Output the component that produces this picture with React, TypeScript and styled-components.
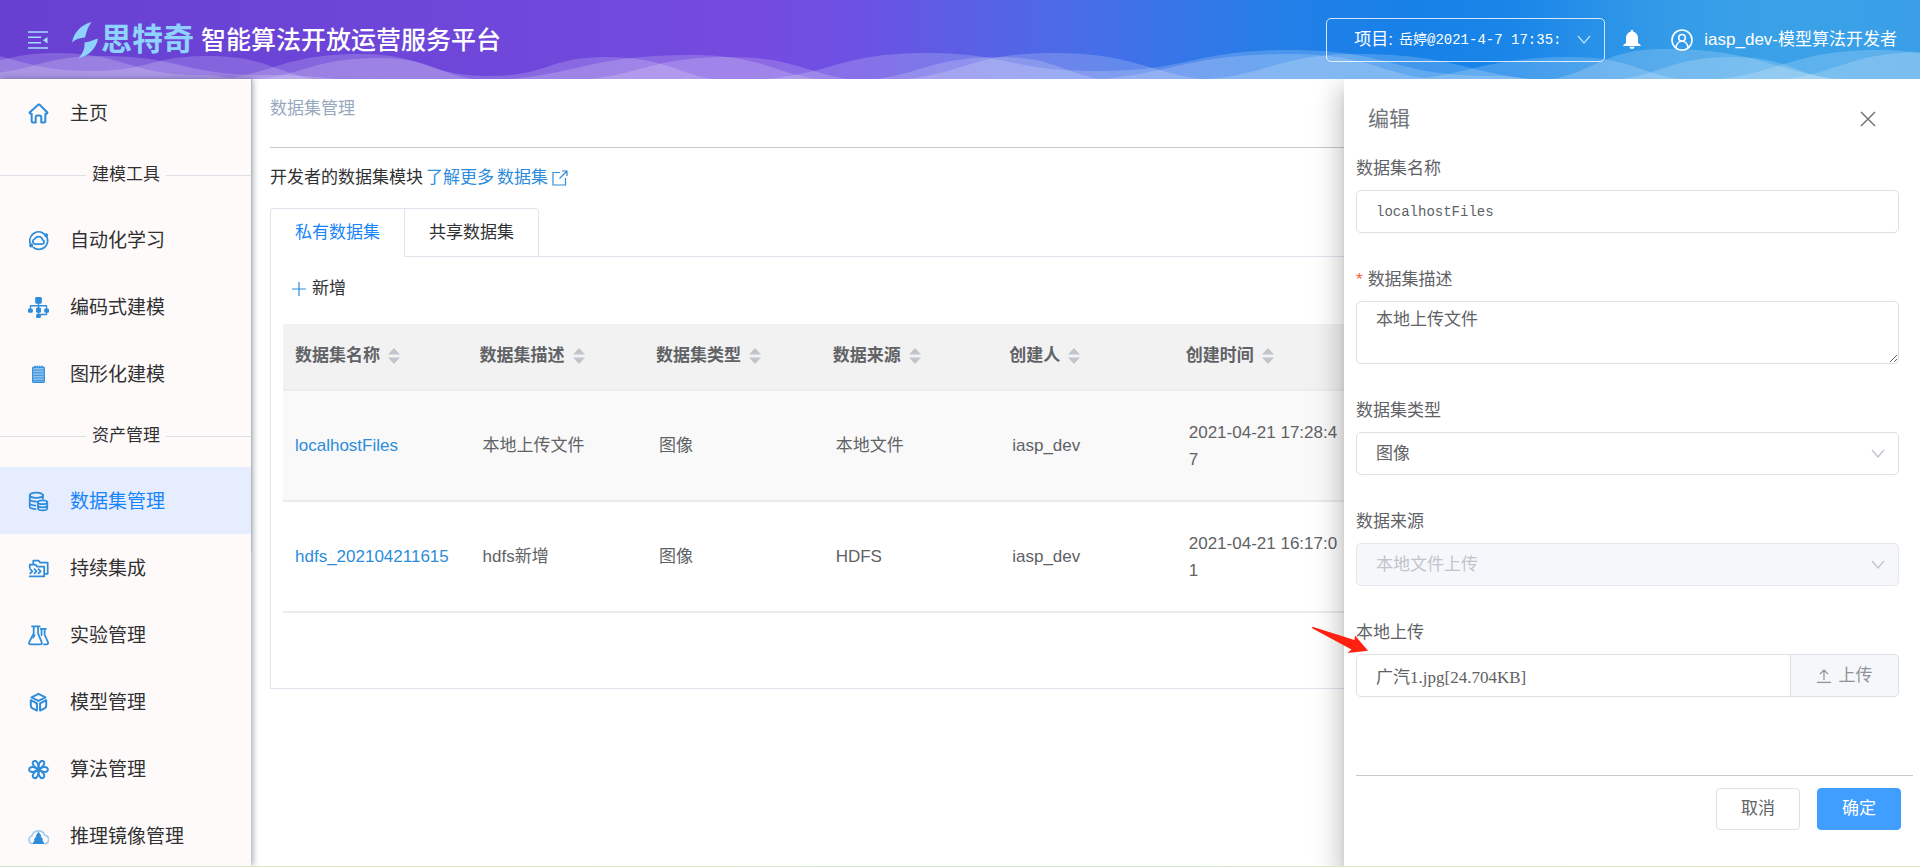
import React, { useState } from "react";
import styled, { createGlobalStyle, css } from "styled-components";

const sans = `"Liberation Sans", "Noto Sans CJK SC", sans-serif`;
const serif = `"Liberation Serif", "Noto Sans CJK SC", serif`;
const mono = `"Liberation Mono", "Noto Sans CJK SC", monospace`;

const color = {
  text: "#303133",
  regular: "#606266",
  muted: "#909399",
  placeholder: "#c0c4cc",
  border: "#dcdfe6",
  line: "#dfe4ed",
  link: "#2d8cdb",
  primary: "#409eff",
  active: "#1684fc",
};

const GlobalStyle = createGlobalStyle`
  *, *::before, *::after { box-sizing: border-box; }
  body {
    margin: 0;
    background: #fff;
    color: ${color.text};
    font-family: ${sans};
    font-size: 17px;
    line-height: 24px;
  }
  button, input, select, textarea { font: inherit; color: inherit; }
  a { color: ${color.link}; text-decoration: none; }
`;

/* ---------- shell ---------- */

const Shell = styled.div`
  position: relative;
  display: grid;
  grid-template-rows: 79px minmax(0, 1fr) 1px;
  height: 100vh;
  overflow: hidden;
`;

const Body = styled.div`
  display: flex;
  min-height: 0;
`;

const BottomStrip = styled.div`
  position: relative;
  z-index: 5;
  background: linear-gradient(90deg, #cfe8d4, #dcebc4 20%, #cfe8cc 50%, #dcebc4);
`;

/* ---------- header ---------- */

const Header = styled.header`
  position: relative;
  display: flex;
  align-items: center;
  justify-content: space-between;
  padding: 0 23px 0 28px;
  color: #fff;
  background: linear-gradient(
    90deg,
    #6740d2 0%,
    #7049dc 30%,
    #754adf 39%,
    #6b52e4 45%,
    #5861e6 51%,
    #4a6ce8 56%,
    #227fe8 67%,
    #1681e8 74%,
    #1a86e8 79%,
    #3299e8 86%,
    #3aa1e8 92%,
    #3a9fe8 100%
  );
`;

const Waves = styled.svg`
  position: absolute;
  left: 0;
  bottom: 0;
  width: 100%;
  height: 100%;
`;

const HeaderGroup = styled.div`
  position: relative;
  display: flex;
  align-items: center;
`;

const IconButton = styled.button`
  display: flex;
  padding: 0;
  border: 0;
  background: none;
  cursor: pointer;
`;

const Brand = styled.div`
  display: flex;
  align-items: center;
  gap: 3px;
  margin: 0 7px 0 24px;
  color: #8fd2ff;
  font-size: 31px;
  font-weight: 700;
  line-height: 36px;
`;

const SiteTitle = styled.h1`
  margin: 0;
  font-size: 25px;
  font-weight: 500;
  line-height: 36px;
`;

const ProjectPicker = styled.div`
  display: flex;
  align-items: center;
  gap: 6px;
  width: 279px;
  height: 44px;
  margin-right: 18px;
  padding: 0 13px 0 27px;
  border: 1px solid rgba(255, 255, 255, 0.8);
  border-radius: 5px;
`;

const ProjectSelect = styled.select`
  appearance: none;
  flex: 1;
  min-width: 0;
  margin-right: 6px;
  padding: 0;
  border: 0;
  outline: 0;
  background: none;
  font-family: ${mono};
  font-size: 14px;
  text-overflow: clip;
`;

const UserLink = styled.a`
  display: flex;
  align-items: center;
  gap: 11px;
  margin-left: 30px;
  color: #fff;
`;

/* ---------- sidebar ---------- */

const Sidebar = styled.nav`
  position: relative;
  z-index: 1;
  flex: none;
  width: 251px;
  background: #fffafa;
  box-shadow: 2px 0 6px rgba(0, 21, 41, 0.35);
`;

const ScrollThumb = styled.span`
  position: absolute;
  top: 0;
  right: -1px;
  width: 1px;
  height: 60%;
  background: #b4b6ba;
`;

const NavItem = styled.a<{ $active?: boolean }>`
  display: flex;
  align-items: center;
  gap: 21px;
  height: 67px;
  padding: 2px 0 0 28px;
  font-size: 19px;
  color: ${(p) => (p.$active ? color.active : color.text)};
  background: ${(p) => (p.$active ? "#e6edff" : "transparent")};
`;

const NavDivider = styled.div`
  display: flex;
  align-items: center;
  gap: 6px;
  height: 60px;
  padding-bottom: 2px;
  &::before,
  &::after {
    content: "";
    height: 1px;
    background: ${color.border};
  }
  &::before {
    width: 86px;
  }
  &::after {
    flex: 1;
  }
`;

/* ---------- main ---------- */

const Main = styled.main`
  flex: 1;
  min-width: 0;
  padding: 0 19px;
`;

const PageHeading = styled.h2`
  margin: 0;
  padding: 18px 0 26px;
  border-bottom: 1px solid #c8c8cc;
  color: #97a8be;
  font-size: 17px;
  font-weight: 400;
`;

const Intro = styled.p`
  display: flex;
  align-items: center;
  gap: 3px;
  margin: 18px 0;
`;

const IntroLink = styled.a`
  display: inline-flex;
  align-items: center;
  gap: 4px;
`;

const TabBar = styled.div`
  display: flex;
  &::after {
    content: "";
    flex: 1;
    border-bottom: 1px solid ${color.line};
  }
`;

const Tab = styled.button<{ $active?: boolean }>`
  height: 49px;
  padding: 0 24px;
  border: 1px solid ${color.line};
  border-left-width: 0;
  background: #fff;
  cursor: pointer;
  color: ${(p) => (p.$active ? color.active : color.text)};
  ${(p) => p.$active && css`border-bottom-color: #fff;`}
  &:first-child {
    border-left-width: 1px;
    border-top-left-radius: 4px;
  }
  &:last-child {
    border-top-right-radius: 4px;
  }
`;

const Panel = styled.section`
  padding: 20px 12px 75px;
  border: 1px solid ${color.line};
  border-top: 0;
`;

const AddButton = styled.button`
  display: flex;
  align-items: center;
  gap: 6px;
  margin: 0 0 23px 9px;
  padding: 0;
  border: 0;
  background: none;
  cursor: pointer;
`;

const Table = styled.table`
  width: 100%;
  table-layout: fixed;
  border-collapse: separate;
  border-spacing: 0;
  color: ${color.regular};
`;

const HeadCell = styled.th`
  height: 67px;
  padding: 0 12px 2px;
  border-bottom: 2px solid #ececec;
  background: #f2f2f2;
  text-align: left;
  font-weight: 700;
  white-space: nowrap;
`;

const HeadLabel = styled.span`
  display: inline-flex;
  align-items: center;
  gap: 8px;
`;

const Row = styled.tr<{ $striped?: boolean }>`
  background: ${(p) => (p.$striped ? "#f9f9f9" : "#fff")};
`;

const Cell = styled.td`
  height: 111px;
  padding: 0 8px 0 15px;
  border-bottom: 2px solid #ebebef;
  line-height: 27px;
  word-break: break-all;
  &:first-child {
    padding-left: 12px;
  }
`;

/* ---------- drawer ---------- */

const Drawer = styled.aside`
  position: absolute;
  z-index: 3;
  top: 79px;
  right: 0;
  bottom: 0;
  width: 30%;
  background: #fff;
  color: ${color.regular};
  clip-path: inset(0 0 0 -60px);
  box-shadow: 0 8px 10px -5px rgba(0, 0, 0, 0.2),
    0 16px 24px 2px rgba(0, 0, 0, 0.14), 0 6px 30px 5px rgba(0, 0, 0, 0.12);
`;

const DrawerHead = styled.div`
  display: flex;
  align-items: center;
  justify-content: space-between;
  padding: 23px 44px 21px 24px;
  color: #72767b;
`;

const DrawerTitle = styled.h2`
  margin: 0;
  font-size: 21px;
  font-weight: 400;
  line-height: 33px;
`;

const Form = styled.form`
  padding-left: 12px;
`;

const Field = styled.div`
  margin: 0 21px 34px 0;
`;

const Label = styled.label<{ $required?: boolean }>`
  display: block;
  padding: 1px 0 9px;
  ${(p) =>
    p.$required &&
    css`
      &::before {
        content: "*";
        margin-right: 5px;
        color: #ff5b45;
      }
    `}
`;

const control = css`
  display: block;
  width: 100%;
  border: 1px solid ${color.border};
  border-radius: 5px;
  outline: 0;
  background: #fff;
  color: ${color.regular};
  font-family: ${serif};
  &:disabled {
    background: #f5f7fa;
    border-color: #e4e7ed;
    color: ${color.placeholder};
    opacity: 1;
  }
`;

const TextInput = styled.input<{ $code?: boolean }>`
  ${control}
  height: 43px;
  padding: 0 19px;
  ${(p) =>
    p.$code &&
    css`
      font-family: ${mono};
      font-size: 14px;
    `}
`;

const TextArea = styled.textarea`
  ${control}
  height: 63px;
  padding: 5px 19px;
  line-height: 26px;
  resize: vertical;
`;

const SelectBox = styled.div`
  display: grid;
  align-items: center;
  & > * {
    grid-area: 1 / 1;
  }
  & > svg {
    justify-self: end;
    margin-right: 14px;
    pointer-events: none;
  }
`;

const Select = styled.select`
  ${control}
  appearance: none;
  height: 43px;
  padding: 0 40px 0 19px;
`;

const UploadRow = styled.div`
  position: relative;
  display: flex;
  & > input {
    flex: 1;
    min-width: 0;
    border-radius: 5px 0 0 5px;
  }
`;

const UploadButton = styled.button`
  display: flex;
  align-items: center;
  justify-content: center;
  gap: 8px;
  width: 108px;
  border: 1px solid ${color.border};
  border-left: 0;
  border-radius: 0 5px 5px 0;
  background: #f5f7fa;
  color: ${color.muted};
  cursor: pointer;
`;

const Pointer = styled.svg`
  position: absolute;
  left: -44px;
  top: -27px;
`;

const Actions = styled.div`
  display: flex;
  justify-content: flex-end;
  gap: 17px;
  margin: 78px 7px 0 0;
  padding: 12px 12px 0 0;
  border-top: 1px solid #c8c8cc;
`;

const ActionButton = styled.button<{ $primary?: boolean }>`
  width: 84px;
  height: 42px;
  padding: 0;
  border: 1px solid ${(p) => (p.$primary ? color.primary : color.border)};
  border-radius: 4px;
  background: ${(p) => (p.$primary ? color.primary : "#fff")};
  color: ${(p) => (p.$primary ? "#fff" : color.regular)};
  cursor: pointer;
`;

/* ---------- icons ---------- */

type IconProps = { size?: number; children: React.ReactNode };

const Icon = ({ size = 21, children }: IconProps) => (
  <svg
    width={size}
    height={size}
    viewBox="0 0 24 24"
    fill="none"
    stroke={color.link}
    strokeWidth="2"
    strokeLinecap="round"
    strokeLinejoin="round"
    aria-hidden="true"
  >
    {children}
  </svg>
);

const navIcons = {
  home: (
    <Icon>
      <path
        strokeWidth="2.3"
        d="M12 1.8 1.8 10.8c0 1 .6 1.6 1.6 1.6h.8v8.400c0 .9.4 1.400 1.400 1.400h3.200v-5.600c0-1.400.8-2.200 2.200-2.200h2c1.400 0 2.200.8 2.200 2.200v5.600h3.200c1 0 1.400-.5 1.400-1.400v-8.400h.8c1 0 1.600-.6 1.600-1.600L13 1.800z"
      />
    </Icon>
  ),
  auto: (
    <Icon>
      <path d="M3 16.500A10 10 0 0 1 18.500 4.600M21.300 7.500A10 10 0 0 1 6 19.800" />
      <circle cx="20.700" cy="6" r="1.300" fill={color.link} />
      <circle cx="3.600" cy="17.800" r="1.300" fill={color.link} />
      <path d="M8 16h8.300a2.400 2.400 0 0 0 .4-4.700 4.700 4.700 0 0 0-8.900-1A2.900 2.900 0 0 0 8 16z" />
    </Icon>
  ),
  code: (
    <Icon>
      <g fill={color.link} stroke="none">
        <rect x="8.200" y="0" width="7.600" height="7.600" rx="1.500" />
        <rect x="0" y="13" width="5.500" height="5" rx="1.500" />
        <rect x="9.200" y="12" width="5.600" height="6" rx="1.500" />
        <rect x="18.500" y="13" width="5.500" height="5" rx="1.500" />
        <rect x="9.200" y="19.500" width="5.600" height="4.500" rx="1.500" />
      </g>
      <path strokeWidth="1.500" d="M12 7v13M2.800 13.500V10h18.400v3.500M21.200 17.500v2.500H12" />
    </Icon>
  ),
  graph: (
    <Icon>
      <rect x="5.400" y="3.500" width="13.200" height="17.600" rx="1" fill="#8fc1ec" strokeWidth="1.500" />
      <path strokeWidth="1.500" d="M8 2.500v1M10.700 2.500v1M13.400 2.500v1M16 2.500v1" />
      <path strokeWidth="1" d="M7 7h10M7 10h10M7 13h10M7 16h10M7 19h10" />
    </Icon>
  ),
  dataset: (
    <Icon>
      <ellipse cx="9.500" cy="4.800" rx="7.500" ry="3" />
      <path d="M2 4.800v13.200c0 1.400 2.400 2.400 6.500 2.700M2 9.500c0 1.500 3.400 2.600 8 2.600M2 14c0 1.300 2.600 2.300 6.500 2.600M17 4.800v4" />
      <ellipse cx="16.700" cy="12.800" rx="5.300" ry="2.200" />
      <path d="M11.400 12.800v7c0 1.400 2.300 2.400 5.300 2.400s5.300-1 5.300-2.400v-7M11.400 16.300c0 1.300 2.300 2.300 5.300 2.300s5.300-1 5.300-2.300" />
    </Icon>
  ),
  pipeline: (
    <Icon>
      <path d="M6 6V3h6l2 2.300h8.500V18H20" />
      <path d="M2 11V7.500h6.500l2 2.300H18.500V21H2" />
      <path d="M2.500 12.800l2.500 2.400-2.500 2.400M7.300 12.800l2.500 2.400-2.500 2.400M12 12.800l2.500 2.400-2.500 2.400" />
    </Icon>
  ),
  flask: (
    <Icon>
      <path d="M4.500 1.500h9M6.500 2v7.500L1.400 19.500c-.6 1.600.2 2.700 1.600 2.700h11c1.600 0 2.300-1.200 1.600-2.700L11.500 9.500V2" />
      <path d="M14.500 4.500h6M19 5v6l3.800 8.500c.5 1.500-.2 2.700-1.600 2.700h-3M15.500 5v6.500M6 14.500l1.500-3" />
    </Icon>
  ),
  cube: (
    <Icon>
      <path strokeWidth="2.300" d="M12 2.200l8 3.900-8 4.100-8-4.100z" />
      <path strokeWidth="2.300" d="M3.200 9.300l7 3.600v8.300l-5-2.500c-1.300-.7-2-1.600-2-3zM20.800 9.300l-7 3.600v8.300l5-2.500c1.300-.7 2-1.600 2-3z" />
    </Icon>
  ),
  atom: (
    <Icon>
      <g strokeWidth="2.300">
        <path d="M12 12C8 8.500 1.300 8 1.300 12s6.700 3.500 10.700 0c4-3.500 10.700-4 10.700 0s-6.700 3.500-10.700 0z" />
        <path d="M12 12C13 6.800 10 .8 6.700 2.500S7 10 12 12c5 2 8.600 7.800 5.300 9.500S11 17.200 12 12z" />
        <path d="M12 12c5-2 8.600-7.800 5.300-9.500S11 6.800 12 12c1 5.200-2 11.200-5.300 9.500S7 14 12 12z" />
      </g>
    </Icon>
  ),
  cloud: (
    <Icon>
      <path
        stroke="#a5cdf0"
        d="M4.500 20.200A4.600 4.600 0 0 1 4.500 11.300 7.800 7.800 0 0 1 19.300 10.600a4.900 4.900 0 0 1 .7 9.600"
      />
      <path fill={color.link} stroke="none" d="M12 6.500l3.300 4.500-1 .4 3 4-1 .4 2.700 4.900H5l2.700-4.900-1-.4 3-4-1-.4z" />
    </Icon>
  ),
};

const Chevron = ({ stroke = color.placeholder }: { stroke?: string }) => (
  <svg width="14" height="9" viewBox="0 0 14 9" fill="none" stroke={stroke} strokeWidth="1.300" aria-hidden="true">
    <path d="M1 1l6 7 6-7" />
  </svg>
);

const SortIcon = () => (
  <svg width="12" height="16" viewBox="0 0 12 16" fill={color.placeholder} aria-hidden="true">
    <path d="M0 6.500L6 0l6 6.500zM0 9.500h12L6 16z" />
  </svg>
);

/* Each wave is a list of its crests and troughs, joined by smooth curves. */
type Point = [number, number];

const waves: Point[][] = [
  [[-30, 62], [55, 53], [200, 75], [260, 82]],
  [[-60, 50], [92, 71], [208, 56], [350, 82]],
  [[-30, 74], [101, 56], [263, 75], [400, 82]],
  [[225, 81], [380, 58], [500, 81]],
  [[180, 82], [361, 54], [490, 76], [606, 57], [750, 82]],
  [[550, 81], [729, 57], [890, 82]],
  [[460, 81], [692, 55], [860, 82]],
  [[735, 80], [925, 53], [1095, 71], [1290, 50], [1493, 76], [1560, 82]],
  [[870, 81], [1052, 53], [1250, 82]],
  [[840, 81], [1000, 57], [1130, 81]],
  [[1050, 81], [1290, 54], [1475, 82]],
  [[1180, 80], [1358, 54], [1580, 81]],
  [[1370, 81], [1572, 57], [1710, 81]],
  [[1520, 82], [1664, 49], [1890, 82]],
  [[1590, 81], [1732, 57], [1860, 81]],
  [[1750, 81], [1925, 52], [2080, 81]],
  [[1680, 81], [1879, 50], [2040, 81]],
];

const wavePath = ([first, ...rest]: Point[]) => {
  let d = `M${first[0]} 90V${first[1]}`;
  let [px, py] = first;
  for (const [x, y] of rest) {
    const mid = (px + x) / 2;
    d += `C${mid} ${py} ${mid} ${y} ${x} ${y}`;
    [px, py] = [x, y];
  }
  return `${d}V90Z`;
};

/* ---------- data ---------- */

type NavEntry = { label: string; icon?: keyof typeof navIcons };

const navEntries: NavEntry[] = [
  { label: "主页", icon: "home" },
  { label: "建模工具" },
  { label: "自动化学习", icon: "auto" },
  { label: "编码式建模", icon: "code" },
  { label: "图形化建模", icon: "graph" },
  { label: "资产管理" },
  { label: "数据集管理", icon: "dataset" },
  { label: "持续集成", icon: "pipeline" },
  { label: "实验管理", icon: "flask" },
  { label: "模型管理", icon: "cube" },
  { label: "算法管理", icon: "atom" },
  { label: "推理镜像管理", icon: "cloud" },
];

const columns = ["数据集名称", "数据集描述", "数据集类型", "数据来源", "创建人", "创建时间"];

const rows = [
  ["localhostFiles", "本地上传文件", "图像", "本地文件", "iasp_dev", "2021-04-21 17:28:47"],
  ["hdfs_202104211615", "hdfs新增", "图像", "HDFS", "iasp_dev", "2021-04-21 16:17:01"],
];

const tabs = ["私有数据集", "共享数据集"];

/* ---------- page ---------- */

const TopBar = () => (
  <Header>
    <Waves viewBox="0 0 1920 79" preserveAspectRatio="none" aria-hidden="true">
      {waves.map((points, index) => (
        <path key={index} d={wavePath(points)} fill="#fff" fillOpacity="0.18" />
      ))}
    </Waves>
    <HeaderGroup>
      <IconButton type="button">
        <svg width="20" height="18" viewBox="0 0 20 18" fill="none" stroke="#a8dcff" strokeWidth="1.400" aria-hidden="true">
          <path d="M0 1h20M0 6.300h13M0 11.700h13M0 17h20" />
          <path d="M19.500 6v6.500L15 9.200z" fill="#a8dcff" stroke="none" />
        </svg>
      </IconButton>
      <Brand>
        <svg width="26" height="36" viewBox="0 0 26 36" fill="#8fd2ff" aria-hidden="true">
          <path d="M19.500 0C9 3 2 10 0 20.500c4-3.500 8-4.700 13-5C14.500 9 16.500 4 19.500 0z" />
          <path d="M26 16.500c-4 1.500-8 3-13.500 4C13 27 10.500 32 6.500 36 17 34 24.500 26 26 16.500z" />
        </svg>
        思特奇
      </Brand>
      <SiteTitle>智能算法开放运营服务平台</SiteTitle>
    </HeaderGroup>
    <HeaderGroup>
      <ProjectPicker>
        <label htmlFor="project">项目:</label>
        <ProjectSelect id="project">
          <option>岳婷@2021-4-7 17:35:</option>
        </ProjectSelect>
        <Chevron stroke="rgba(255,255,255,0.7)" />
      </ProjectPicker>
      <IconButton type="button">
        <svg width="18" height="19" viewBox="0 0 18 19" fill="#fff" aria-hidden="true">
          <path d="M9 0c.8 0 1.300.5 1.300 1.300v.5C13.200 2.500 15 4.800 15 8v5l2 1.500c.6.500.9.800.9 1.500H.1c0-.7.3-1 .9-1.500L3 13V8c0-3.200 1.800-5.500 4.700-6.200v-.5C7.700.500 8.200 0 9 0z" />
          <path d="M6.500 16.800h5C11.300 18.200 10.300 19 9 19s-2.300-.8-2.500-2.200z" />
        </svg>
      </IconButton>
      <UserLink href="#user">
        <svg width="22" height="22" viewBox="0 0 22 22" fill="none" stroke="#fff" strokeWidth="1.600" aria-hidden="true">
          <circle cx="11" cy="11" r="10" />
          <circle cx="11" cy="8.800" r="3.300" />
          <path d="M5 18.600c.3-3.800 2.800-6.400 6-6.400s5.700 2.600 6 6.400" />
        </svg>
        iasp_dev-模型算法开发者
      </UserLink>
    </HeaderGroup>
  </Header>
);

const SideNav = () => (
  <Sidebar>
    {navEntries.map(({ label, icon }) =>
      icon ? (
        <NavItem key={label} href="#nav" $active={icon === "dataset"}>
          {navIcons[icon]}
          {label}
        </NavItem>
      ) : (
        <NavDivider key={label}>{label}</NavDivider>
      )
    )}
    <ScrollThumb />
  </Sidebar>
);

const DatasetTable = () => (
  <Table>
    <colgroup>
      <col width="11.5%" />
      {columns.slice(1).map((name) => (
        <col key={name} width="11%" />
      ))}
      <col />
    </colgroup>
    <thead>
      <tr>
        {columns.map((name) => (
          <HeadCell key={name} scope="col">
            <HeadLabel>
              {name}
              <SortIcon />
            </HeadLabel>
          </HeadCell>
        ))}
        <HeadCell />
      </tr>
    </thead>
    <tbody>
      {rows.map(([name, ...rest], index) => (
        <Row key={name} $striped={index === 0}>
          <Cell>
            <a href="#dataset">{name}</a>
          </Cell>
          {rest.map((value) => (
            <Cell key={value}>{value}</Cell>
          ))}
          <Cell />
        </Row>
      ))}
    </tbody>
  </Table>
);

const EditDrawer = () => {
  const [name, setName] = useState("localhostFiles");
  const [description, setDescription] = useState("本地上传文件");
  return (
    <Drawer aria-labelledby="drawer-title">
      <DrawerHead>
        <DrawerTitle id="drawer-title">编辑</DrawerTitle>
        <IconButton type="button">
          <svg width="16" height="16" viewBox="0 0 16 16" stroke="#72767b" strokeWidth="1.500" aria-hidden="true">
            <path d="M1 1l14 14M15 1L1 15" />
          </svg>
        </IconButton>
      </DrawerHead>
      <Form onSubmit={(event) => event.preventDefault()}>
        <Field>
          <Label htmlFor="name">数据集名称</Label>
          <TextInput id="name" $code value={name} onChange={(e) => setName(e.target.value)} />
        </Field>
        <Field>
          <Label htmlFor="description" $required>
            数据集描述
          </Label>
          <TextArea id="description" value={description} onChange={(e) => setDescription(e.target.value)} />
        </Field>
        <Field>
          <Label htmlFor="type">数据集类型</Label>
          <SelectBox>
            <Select id="type">
              <option>图像</option>
            </Select>
            <Chevron />
          </SelectBox>
        </Field>
        <Field>
          <Label htmlFor="source">数据来源</Label>
          <SelectBox>
            <Select id="source" disabled>
              <option>本地文件上传</option>
            </Select>
            <Chevron />
          </SelectBox>
        </Field>
        <Field>
          <Label htmlFor="upload">本地上传</Label>
          <UploadRow>
            <TextInput id="upload" readOnly value="广汽1.jpg[24.704KB]" />
            <UploadButton type="button">
              <svg width="14" height="14" viewBox="0 0 14 14" fill="none" stroke={color.muted} strokeWidth="1.200" aria-hidden="true">
                <path d="M0 13.400h14M7 11V1M3 5l4-4 4 4" />
              </svg>
              上传
            </UploadButton>
            <Pointer width="56" height="26" viewBox="0 0 56 26" fill="#ff2010" aria-hidden="true">
              <path d="M0 .5C.5 0 1 0 2 .300L42.500 13 43 8.500 56 23.700 35.500 26 39.500 22.500 2 2.200C.5 1.500 0 1 0 .5z" />
            </Pointer>
          </UploadRow>
        </Field>
        <Actions>
          <ActionButton type="button">取消</ActionButton>
          <ActionButton type="submit" $primary>
            确定
          </ActionButton>
        </Actions>
      </Form>
    </Drawer>
  );
};

export default function App() {
  const [tab, setTab] = useState(0);
  return (
    <>
      <GlobalStyle />
      <Shell>
        <TopBar />
        <Body>
          <SideNav />
          <Main>
            <PageHeading>数据集管理</PageHeading>
            <Intro>
              开发者的数据集模块
              <IntroLink href="#more">了解更多</IntroLink>
              <IntroLink href="#datasets">
                数据集
                <svg width="16" height="16" viewBox="0 0 16 16" fill="none" stroke={color.link} strokeWidth="1.200" aria-hidden="true">
                  <path d="M8 2.500H1V15h12.500V8M10 1h5v5M15 1L7.500 8.500" />
                </svg>
              </IntroLink>
            </Intro>
            <TabBar role="tablist">
              {tabs.map((label, index) => (
                <Tab
                  key={label}
                  type="button"
                  role="tab"
                  aria-selected={tab === index}
                  $active={tab === index}
                  onClick={() => setTab(index)}
                >
                  {label}
                </Tab>
              ))}
            </TabBar>
            <Panel>
              <AddButton type="button">
                <svg width="14" height="14" viewBox="0 0 14 14" stroke={color.link} strokeWidth="1.200" aria-hidden="true">
                  <path d="M0 7h14M7 0v14" />
                </svg>
                新增
              </AddButton>
              <DatasetTable />
            </Panel>
          </Main>
        </Body>
        <EditDrawer />
        <BottomStrip />
      </Shell>
    </>
  );
}
